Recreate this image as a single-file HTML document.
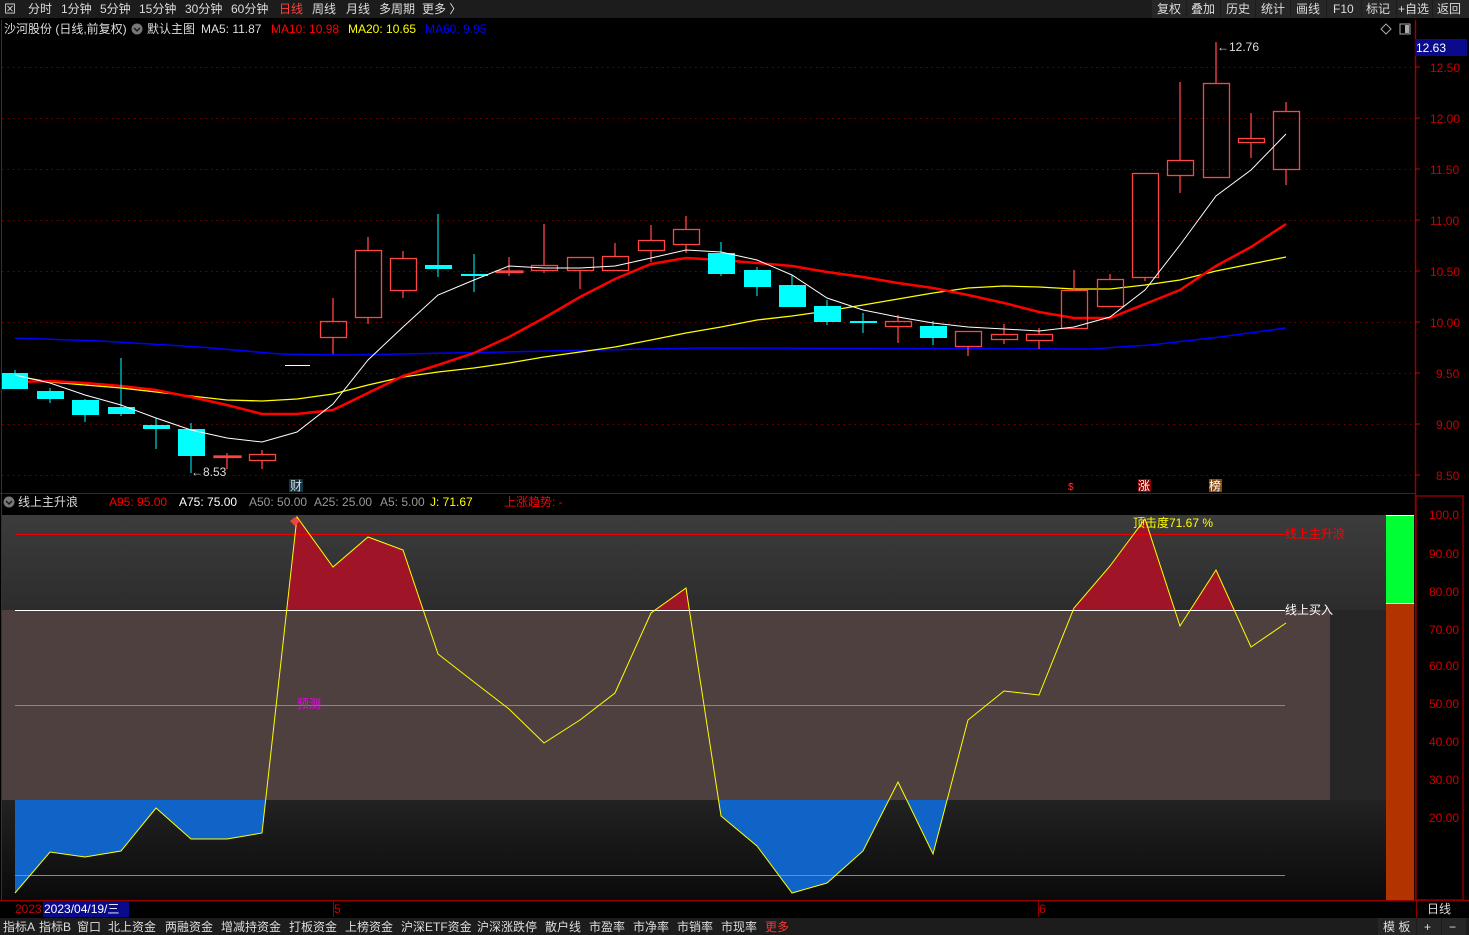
<!DOCTYPE html>
<html><head><meta charset="utf-8"><style>
*{margin:0;padding:0}
body{width:1469px;height:935px;background:#000;overflow:hidden;font-family:"Liberation Sans","Noto Sans CJK SC",sans-serif;position:relative}
.t{position:absolute;font-size:12px;white-space:nowrap}
</style></head><body>
<svg width="1469" height="935" style="position:absolute;left:0;top:0" font-family="Liberation Sans, Noto Sans CJK SC, sans-serif" font-size="12">
<defs>
<linearGradient id="g1" x1="0" y1="0" x2="0" y2="1"><stop offset="0" stop-color="#3c3c3c"/><stop offset="1" stop-color="#2c2c2c"/></linearGradient>
<linearGradient id="g2" x1="0" y1="0" x2="0" y2="1"><stop offset="0" stop-color="#222"/><stop offset="1" stop-color="#0a0a0a"/></linearGradient>
<clipPath id="cTop"><rect x="0" y="500" width="1400" height="110"/></clipPath>
<clipPath id="cBot"><rect x="0" y="800" width="1400" height="100"/></clipPath>
</defs>
<!-- top toolbar -->
<rect x="0" y="0" width="1469" height="18" fill="#1c1c1c"/>
<g fill="#ddd" font-size="12">
<text x="4" y="13">⊠</text>
<text x="28" y="13">分时</text><text x="61" y="13">1分钟</text><text x="100" y="13">5分钟</text><text x="139" y="13">15分钟</text><text x="185" y="13">30分钟</text><text x="231" y="13">60分钟</text>
<text x="279" y="13" fill="#ff4040">日线</text><text x="312" y="13">周线</text><text x="346" y="13">月线</text><text x="379" y="13">多周期</text><text x="422" y="13">更多 〉</text>
</g>
<g fill="#ddd">
<rect x="1152" y="0" width="34" height="18" fill="#262626"/><text x="1157" y="13">复权</text>
<rect x="1187" y="0" width="33" height="18" fill="#262626"/><text x="1191" y="13">叠加</text>
<rect x="1221" y="0" width="34" height="18" fill="#262626"/><text x="1226" y="13">历史</text>
<rect x="1256" y="0" width="34" height="18" fill="#262626"/><text x="1261" y="13">统计</text>
<rect x="1291" y="0" width="35" height="18" fill="#262626"/><text x="1296" y="13">画线</text>
<rect x="1327" y="0" width="34" height="18" fill="#262626"/><text x="1333" y="13">F10</text>
<rect x="1362" y="0" width="34" height="18" fill="#262626"/><text x="1366" y="13">标记</text>
<rect x="1397" y="0" width="35" height="18" fill="#262626"/><text x="1398" y="13">+自选</text>
<rect x="1433" y="0" width="36" height="18" fill="#262626"/><text x="1437" y="13">返回</text>
</g>
<!-- header line -->
<text x="4" y="33" fill="#ddd">沙河股份 (日线,前复权)</text>
<circle cx="137" cy="29" r="5.5" fill="#777"/><path d="M134 28l3 3 3-3" stroke="#111" fill="none" stroke-width="1.3"/>
<text x="147" y="33" fill="#ddd">默认主图</text>
<text x="201" y="33" fill="#ddd">MA5: 11.87</text>
<text x="271" y="33" fill="#f00">MA10: 10.98</text>
<text x="348" y="33" fill="#ff0">MA20: 10.65</text>
<text x="425" y="33" fill="#00f">MA60: 9.95</text>
<path d="M1386 24l5 5-5 5-5-5z" stroke="#aaa" fill="none"/>
<rect x="1400" y="24" width="10" height="10" stroke="#aaa" fill="none"/><rect x="1405" y="25" width="4" height="8" fill="#aaa"/>
<!-- axes -->
<line x1="1415.5" y1="20" x2="1415.5" y2="900" stroke="#900" stroke-width="1.5"/>
<line x1="0" y1="493.5" x2="1415" y2="493.5" stroke="#900"/>
<line x1="0" y1="900.5" x2="1469" y2="900.5" stroke="#900" stroke-width="1.5"/>
<line x1="1.5" y1="20" x2="1.5" y2="900" stroke="#333"/>
<rect x="1415" y="39" width="52" height="17" fill="#0a0a8c"/><text x="1416" y="52" fill="#fff">12.63</text>
<g stroke="#700" stroke-dasharray="1.5 4">
<line x1="2" y1="67.5" x2="1415" y2="67.5"/><line x1="2" y1="118.5" x2="1415" y2="118.5"/><line x1="2" y1="169.5" x2="1415" y2="169.5"/><line x1="2" y1="220.5" x2="1415" y2="220.5"/><line x1="2" y1="271.5" x2="1415" y2="271.5"/><line x1="2" y1="322.5" x2="1415" y2="322.5"/><line x1="2" y1="373.5" x2="1415" y2="373.5"/><line x1="2" y1="424.5" x2="1415" y2="424.5"/><line x1="2" y1="475.5" x2="1415" y2="475.5"/>
</g>
<g fill="#c00" font-size="12">
<text x="1430" y="72">12.50</text><text x="1430" y="123">12.00</text><text x="1430" y="174">11.50</text><text x="1430" y="225">11.00</text><text x="1430" y="276">10.50</text><text x="1430" y="327">10.00</text><text x="1436" y="378">9.50</text><text x="1436" y="429">9.00</text><text x="1436" y="480">8.50</text>
</g>
<g stroke="#c00"><line x1="1415" y1="67" x2="1420" y2="67"/><line x1="1415" y1="118" x2="1420" y2="118"/><line x1="1415" y1="169" x2="1420" y2="169"/><line x1="1415" y1="220" x2="1420" y2="220"/><line x1="1415" y1="271" x2="1420" y2="271"/><line x1="1415" y1="322" x2="1420" y2="322"/><line x1="1415" y1="373" x2="1420" y2="373"/><line x1="1415" y1="424" x2="1420" y2="424"/><line x1="1415" y1="475" x2="1420" y2="475"/></g>
<!-- MA lines -->
<polyline fill="none" stroke="#00f" stroke-width="1.5" points="15,338 100,341 200,347 280,354 350,355 700,348 1090,349 1150,345 1220,337 1286,328"/>
<polyline fill="none" stroke="#ff0" stroke-width="1.3" points="15,376 50,382 85,385 121,388 156,392 191,396 227,400 262,401 297,399 333,394 368,385 403,377 438,372 474,368 509,363 544,357 580,352 615,347 651,340 686,333 721,327 757,320 792,316 827,311 863,305 898,299 933,293 968,288 1004,286 1039,287 1074,289 1110,289 1145,285 1180,280 1216,271 1251,264 1286,257"/>
<polyline fill="none" stroke="#f00" stroke-width="2.5" points="15,382 50,381 85,383 121,386 156,390 191,397 227,405 262,414 297,414 333,410 368,393 403,376 438,365 474,353 509,337 544,318 580,297 615,279 651,264 686,258 721,260 757,263 792,266 827,272 863,277 898,283 933,288 968,295 1004,303 1039,312 1074,318 1110,318 1145,304 1180,290 1216,266 1251,247 1286,224"/>
<!-- candles -->
<g stroke="#0ff" fill="#0ff">
<line x1="15" y1="370" x2="15" y2="389"/><rect x="2" y="373" width="26" height="16" stroke="none"/>
<line x1="50" y1="388" x2="50" y2="403"/><rect x="37" y="391" width="27" height="8" stroke="none"/>
<line x1="85" y1="399" x2="85" y2="422"/><rect x="72" y="400" width="27" height="15" stroke="none"/>
<line x1="121" y1="358" x2="121" y2="416"/><rect x="108" y="407" width="27" height="7" stroke="none"/>
<line x1="156" y1="418" x2="156" y2="449"/><rect x="143" y="425" width="27" height="4" stroke="none"/>
<line x1="191" y1="423" x2="191" y2="473"/><rect x="178" y="429" width="27" height="27" stroke="none"/>
<line x1="438" y1="214" x2="438" y2="277"/><rect x="425" y="265" width="27" height="4" stroke="none"/>
<line x1="474" y1="254" x2="474" y2="292"/><rect x="461" y="274" width="27" height="2" stroke="none"/>
<line x1="721" y1="242" x2="721" y2="276"/><rect x="708" y="253" width="27" height="21" stroke="none"/>
<line x1="757" y1="267" x2="757" y2="296"/><rect x="744" y="270" width="27" height="17" stroke="none"/>
<line x1="792" y1="275" x2="792" y2="307"/><rect x="779" y="285" width="27" height="22" stroke="none"/>
<line x1="827" y1="300" x2="827" y2="325"/><rect x="814" y="306" width="27" height="16" stroke="none"/>
<line x1="863" y1="313" x2="863" y2="333"/><rect x="850" y="321" width="27" height="2" stroke="none"/>
<line x1="933" y1="321" x2="933" y2="345"/><rect x="920" y="326" width="27" height="12" stroke="none"/>
</g>
<g stroke="#f44" fill="none" stroke-width="1.3">
<line x1="227" y1="453" x2="227" y2="469"/><rect x="214" y="456" width="27" height="1.5" fill="#f44"/>
<line x1="262" y1="450" x2="262" y2="454"/><line x1="262" y1="460" x2="262" y2="469"/><rect x="249.5" y="454.5" width="26" height="6"/>
<line x1="333" y1="298" x2="333" y2="321"/><line x1="333" y1="337" x2="333" y2="354"/><rect x="320.5" y="321.5" width="26" height="16"/>
<line x1="368" y1="237" x2="368" y2="250"/><line x1="368" y1="317" x2="368" y2="324"/><rect x="355.5" y="250.5" width="26" height="67"/>
<line x1="403" y1="251" x2="403" y2="258"/><line x1="403" y1="290" x2="403" y2="298"/><rect x="390.5" y="258.5" width="26" height="32"/>
<line x1="509" y1="257" x2="509" y2="276"/><rect x="496" y="271" width="27" height="1.5" fill="#f44"/>
<line x1="544" y1="224" x2="544" y2="265"/><line x1="544" y1="270" x2="544" y2="273"/><rect x="531.5" y="265.5" width="26" height="5"/>
<line x1="580" y1="270" x2="580" y2="289"/><rect x="567.5" y="257.5" width="26" height="13"/>
<line x1="615" y1="243" x2="615" y2="256"/><rect x="602.5" y="256.5" width="26" height="14"/>
<line x1="651" y1="225" x2="651" y2="240"/><line x1="651" y1="250" x2="651" y2="262"/><rect x="638.5" y="240.5" width="26" height="10"/>
<line x1="686" y1="216" x2="686" y2="229"/><line x1="686" y1="244" x2="686" y2="253"/><rect x="673.5" y="229.5" width="26" height="15"/>
<line x1="898" y1="315" x2="898" y2="321"/><line x1="898" y1="326" x2="898" y2="343"/><rect x="885.5" y="321.5" width="26" height="5"/>
<line x1="968" y1="346" x2="968" y2="356"/><rect x="955.5" y="331.5" width="26" height="15"/>
<line x1="1004" y1="324" x2="1004" y2="334"/><line x1="1004" y1="339" x2="1004" y2="344"/><rect x="991.5" y="334.5" width="26" height="5"/>
<line x1="1039" y1="328" x2="1039" y2="334"/><line x1="1039" y1="340" x2="1039" y2="349"/><rect x="1026.5" y="334.5" width="26" height="6"/>
<line x1="1074" y1="270" x2="1074" y2="290"/><rect x="1061.5" y="290.5" width="26" height="38"/>
<line x1="1110" y1="274" x2="1110" y2="279"/><rect x="1097.5" y="279.5" width="26" height="27"/>
<line x1="1145" y1="277" x2="1145" y2="281"/><rect x="1132.5" y="173.5" width="26" height="104"/>
<line x1="1180" y1="82" x2="1180" y2="160"/><line x1="1180" y1="175" x2="1180" y2="193"/><rect x="1167.5" y="160.5" width="26" height="15"/>
<line x1="1216" y1="42" x2="1216" y2="83"/><rect x="1203.5" y="83.5" width="26" height="94"/>
<line x1="1251" y1="113" x2="1251" y2="138"/><line x1="1251" y1="142" x2="1251" y2="158"/><rect x="1238.5" y="138.5" width="26" height="4"/>
<line x1="1286" y1="102" x2="1286" y2="111"/><line x1="1286" y1="169" x2="1286" y2="185"/><rect x="1273.5" y="111.5" width="26" height="58"/>
</g>
<line x1="285" y1="365.5" x2="310" y2="365.5" stroke="#fff"/>
<polyline fill="none" stroke="#fff" stroke-width="1" points="15,375 50,383 85,395 121,405 156,418 191,430 227,438 262,442 297,432 333,404 368,360 403,327 438,295 474,280 509,266 544,268 580,268 615,266 651,258 686,250 721,252 757,260 792,275 827,298 863,310 898,317 933,323 968,327 1004,329 1039,331 1074,327 1110,317 1145,290 1180,245 1216,196 1251,170 1286,134"/>
<text x="191" y="476" fill="#ddd">←8.53</text>
<text x="1217" y="51" fill="#ddd">←12.76</text>
<rect x="289" y="479" width="14" height="13" fill="#134"/><text x="290" y="490" fill="#ddd">财</text>
<text x="1068" y="490" fill="#f33" font-size="10">$</text>
<rect x="1138" y="479" width="13" height="13" fill="#800"/><text x="1138" y="490" fill="#fff">涨</text>
<rect x="1209" y="479" width="13" height="13" fill="#8a4a10"/><text x="1209" y="490" fill="#fff">榜</text>
<!-- lower header -->
<circle cx="9" cy="502" r="5.5" fill="#777"/><path d="M6 501l3 3 3-3" stroke="#111" fill="none" stroke-width="1.3"/>
<text x="18" y="506" fill="#ddd">线上主升浪</text>
<text x="109" y="506" fill="#f00">A95: 95.00</text>
<text x="179" y="506" fill="#fff">A75: 75.00</text>
<text x="249" y="506" fill="#999">A50: 50.00</text>
<text x="314" y="506" fill="#999">A25: 25.00</text>
<text x="380" y="506" fill="#999">A5: 5.00</text>
<text x="430" y="506" fill="#ff0">J: 71.67</text>
<text x="504" y="506" fill="#f00">上涨趋势: -</text>
<!-- lower panel -->
<rect x="2" y="515" width="1384" height="95" fill="url(#g1)"/>
<rect x="2" y="610" width="1328" height="190" fill="#4e403e"/>
<rect x="1330" y="610" width="56" height="190" fill="#262626"/>
<rect x="2" y="800" width="1384" height="100" fill="url(#g2)"/>
<rect x="1386" y="515" width="28" height="88" fill="#00ff33"/>
<line x1="1386" y1="603.5" x2="1414" y2="603.5" stroke="#fff"/>
<rect x="1386" y="604" width="28" height="296" fill="#b33300"/>
<line x1="1386" y1="515.5" x2="1414" y2="515.5" stroke="#fff"/>
<polygon clip-path="url(#cTop)" fill="#a01428" points="15,610 15,893 50,852 85,857 121,851 156,808 191,839 227,839 262,833 297,517 333,567 368,537 403,550 438,654 474,682 509,709 544,743 580,720 615,693 651,613 686,588 721,816 757,846 792,893 827,883 863,851 898,782 933,854 968,720 1004,691 1039,695 1074,608 1110,566 1145,519 1180,626 1216,570 1251,647 1286,623 1286,610"/>
<polygon clip-path="url(#cBot)" fill="#1064c8" points="15,800 15,893 50,852 85,857 121,851 156,808 191,839 227,839 262,833 297,517 333,567 368,537 403,550 438,654 474,682 509,709 544,743 580,720 615,693 651,613 686,588 721,816 757,846 792,893 827,883 863,851 898,782 933,854 968,720 1004,691 1039,695 1074,608 1110,566 1145,519 1180,626 1216,570 1251,647 1286,623 1286,800"/>
<line x1="15" y1="534.5" x2="1285" y2="534.5" stroke="#e00"/>
<line x1="15" y1="610.5" x2="1285" y2="610.5" stroke="#fff"/>
<line x1="15" y1="705.5" x2="1285" y2="705.5" stroke="#888"/>
<line x1="15" y1="875.5" x2="1285" y2="875.5" stroke="#888"/>
<polyline fill="none" stroke="#ff0" stroke-width="1" points="15,893 50,852 85,857 121,851 156,808 191,839 227,839 262,833 297,517 333,567 368,537 403,550 438,654 474,682 509,709 544,743 580,720 615,693 651,613 686,588 721,816 757,846 792,893 827,883 863,851 898,782 933,854 968,720 1004,691 1039,695 1074,608 1110,566 1145,519 1180,626 1216,570 1251,647 1286,623"/>
<path d="M290 521l5-4 5 4-5 5z" fill="#e44"/>
<text x="1285" y="538" fill="#f00">线上主升浪</text>
<text x="1285" y="614" fill="#fff">线上买入</text>
<text x="297" y="708" fill="#e0e">预测</text>
<text x="1133" y="527" fill="#ff0">顶击度71.67 %</text>
<g fill="#c00"><text x="1429" y="519">100.0</text><text x="1429" y="558">90.00</text><text x="1429" y="596">80.00</text><text x="1429" y="634">70.00</text><text x="1429" y="670">60.00</text><text x="1429" y="708">50.00</text><text x="1429" y="746">40.00</text><text x="1429" y="784">30.00</text><text x="1429" y="822">20.00</text></g>
<rect x="1416" y="496" width="47" height="404" fill="none" stroke="#800" stroke-width="1.5"/>
<!-- date bar -->
<text x="15" y="913" fill="#c00">2023</text>
<rect x="43" y="901" width="86" height="16" fill="#0a0a8c"/><text x="44" y="913" fill="#fff">2023/04/19/三</text>
<line x1="333.5" y1="901" x2="333.5" y2="917" stroke="#800"/><text x="334" y="913" fill="#c00">5</text>
<line x1="1038.5" y1="901" x2="1038.5" y2="917" stroke="#800"/><text x="1039" y="913" fill="#c00">6</text>
<line x1="1416.5" y1="900" x2="1416.5" y2="918" stroke="#800"/>
<text x="1427" y="913" fill="#ddd">日线</text>
<!-- bottom tabs -->
<rect x="0" y="918" width="1469" height="17" fill="#1c1c1c"/>
<g fill="#ddd">
<text x="3" y="931">指标A</text><text x="39" y="931">指标B</text><text x="77" y="931">窗口</text><text x="108" y="931">北上资金</text><text x="165" y="931">两融资金</text><text x="221" y="931">增减持资金</text><text x="289" y="931">打板资金</text><text x="345" y="931">上榜资金</text><text x="401" y="931">沪深ETF资金</text><text x="477" y="931">沪深涨跌停</text><text x="545" y="931">散户线</text><text x="589" y="931">市盈率</text><text x="633" y="931">市净率</text><text x="677" y="931">市销率</text><text x="721" y="931">市现率</text><text x="765" y="931" fill="#f33">更多</text>
<rect x="1378" y="918" width="38" height="17" fill="#262626"/><text x="1383" y="931">模 板</text>
<rect x="1417" y="918" width="24" height="17" fill="#262626"/><text x="1424" y="931">+</text>
<rect x="1442" y="918" width="24" height="17" fill="#262626"/><text x="1449" y="931">−</text>
</g>
</svg>
</body></html>
